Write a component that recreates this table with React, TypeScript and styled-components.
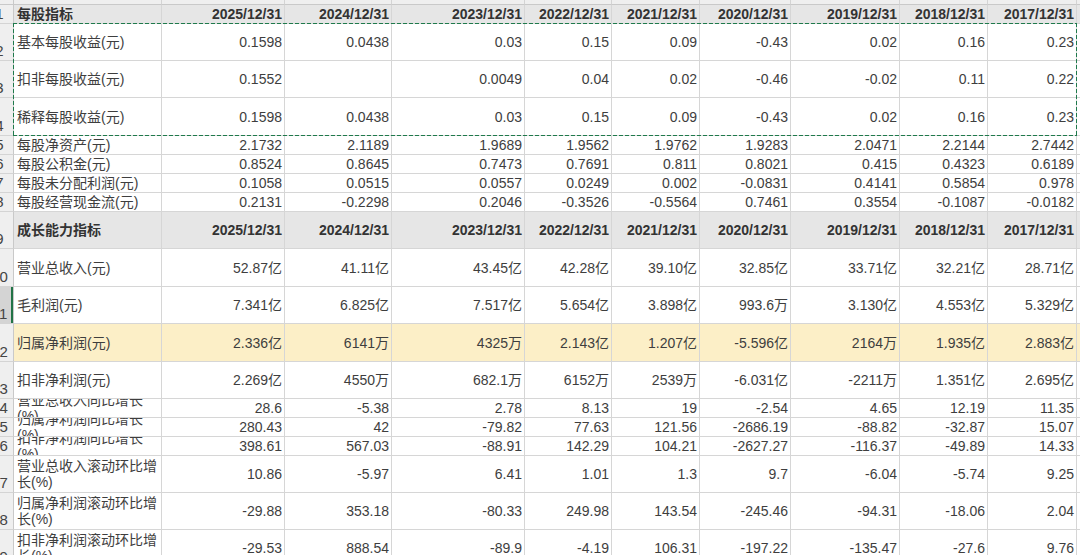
import React from "react";
import styled, { createGlobalStyle, css } from "styled-components";

const GlobalStyle = createGlobalStyle`
  html, body {
    margin: 0;
    padding: 0;
    background: #ffffff;
    overflow: hidden;
  }
  body {
    font-family: "Liberation Sans", "Noto Sans CJK SC", sans-serif;
  }
`;

const COLS = ["A", "B", "C", "D", "E", "F", "G", "H", "I", "J", "K"];
const COL_WIDTHS = [28, 148, 123, 107, 133, 87, 88, 91, 109, 88, 89, 80];
const ROW_HEIGHTS = [20, 19, 37, 37, 38, 19, 19, 19, 19, 37, 38, 37, 38, 37, 19, 19, 19, 37, 37, 37];
const MARQUEE = "#1f7a4c";

const YEARS = [
  "2025/12/31",
  "2024/12/31",
  "2023/12/31",
  "2022/12/31",
  "2021/12/31",
  "2020/12/31",
  "2019/12/31",
  "2018/12/31",
  "2017/12/31",
];

type SheetRow = {
  label: string;
  values: string[];
  kind?: "header" | "highlight";
};

const rows: SheetRow[] = [
  { label: "每股指标", values: YEARS, kind: "header" },
  { label: "基本每股收益(元)", values: ["0.1598", "0.0438", "0.03", "0.15", "0.09", "-0.43", "0.02", "0.16", "0.23"] },
  { label: "扣非每股收益(元)", values: ["0.1552", "", "0.0049", "0.04", "0.02", "-0.46", "-0.02", "0.11", "0.22"] },
  { label: "稀释每股收益(元)", values: ["0.1598", "0.0438", "0.03", "0.15", "0.09", "-0.43", "0.02", "0.16", "0.23"] },
  { label: "每股净资产(元)", values: ["2.1732", "2.1189", "1.9689", "1.9562", "1.9762", "1.9283", "2.0471", "2.2144", "2.7442"] },
  { label: "每股公积金(元)", values: ["0.8524", "0.8645", "0.7473", "0.7691", "0.811", "0.8021", "0.415", "0.4323", "0.6189"] },
  { label: "每股未分配利润(元)", values: ["0.1058", "0.0515", "0.0557", "0.0249", "0.002", "-0.0831", "0.4141", "0.5854", "0.978"] },
  { label: "每股经营现金流(元)", values: ["0.2131", "-0.2298", "0.2046", "-0.3526", "-0.5564", "0.7461", "0.3554", "-0.1087", "-0.0182"] },
  { label: "成长能力指标", values: YEARS, kind: "header" },
  { label: "营业总收入(元)", values: ["52.87亿", "41.11亿", "43.45亿", "42.28亿", "39.10亿", "32.85亿", "33.71亿", "32.21亿", "28.71亿"] },
  { label: "毛利润(元)", values: ["7.341亿", "6.825亿", "7.517亿", "5.654亿", "3.898亿", "993.6万", "3.130亿", "4.553亿", "5.329亿"] },
  { label: "归属净利润(元)", values: ["2.336亿", "6141万", "4325万", "2.143亿", "1.207亿", "-5.596亿", "2164万", "1.935亿", "2.883亿"], kind: "highlight" },
  { label: "扣非净利润(元)", values: ["2.269亿", "4550万", "682.1万", "6152万", "2539万", "-6.031亿", "-2211万", "1.351亿", "2.695亿"] },
  { label: "营业总收入同比增长(%)", values: ["28.6", "-5.38", "2.78", "8.13", "19", "-2.54", "4.65", "12.19", "11.35"] },
  { label: "归属净利润同比增长(%)", values: ["280.43", "42", "-79.82", "77.63", "121.56", "-2686.19", "-88.82", "-32.87", "15.07"] },
  { label: "扣非净利润同比增长(%)", values: ["398.61", "567.03", "-88.91", "142.29", "104.21", "-2627.27", "-116.37", "-49.89", "14.33"] },
  { label: "营业总收入滚动环比增长(%)", values: ["10.86", "-5.97", "6.41", "1.01", "1.3", "9.7", "-6.04", "-5.74", "9.25"] },
  { label: "归属净利润滚动环比增长(%)", values: ["-29.88", "353.18", "-80.33", "249.98", "143.54", "-245.46", "-94.31", "-18.06", "2.04"] },
  { label: "扣非净利润滚动环比增长(%)", values: ["-29.53", "888.54", "-89.9", "-4.19", "106.31", "-197.22", "-135.47", "-27.6", "9.76"] },
];

const gridTemplate = css`
  display: grid;
  grid-template-columns: ${COL_WIDTHS.map((w) => `${w}px`).join(" ")};
  grid-template-rows: ${ROW_HEIGHTS.map((h) => `${h}px`).join(" ")};
`;

// sheet and selection overlay are stacked in the same grid area
const Viewport = styled.div`
  display: grid;
  margin: -15px 0 0 -14px;
  width: max-content;
`;

const Sheet = styled.div`
  ${gridTemplate};
  grid-area: 1 / 1;
  font-size: 14px;
  color: #3a3a3a;
`;

const Overlay = styled.div`
  ${gridTemplate};
  grid-area: 1 / 1;
  pointer-events: none;
  z-index: 2;
`;

const Corner = styled.div`
  box-sizing: border-box;
  background: #efefef;
  border-right: 1px solid #c9c9c9;
  border-bottom: 1px solid #c9c9c9;
`;

const ColHeader = styled.div`
  box-sizing: border-box;
  display: flex;
  align-items: flex-end;
  justify-content: center;
  background: #efefef;
  border-right: 1px solid #d4d4d4;
  border-bottom: 1px solid #c9c9c9;
  color: #555;
  line-height: 14px;
  padding-bottom: 2px;
  overflow: hidden;
`;

const RowNumber = styled.div<{ $active?: boolean }>`
  box-sizing: border-box;
  display: flex;
  align-items: flex-end;
  justify-content: center;
  padding-bottom: 1px;
  background: ${({ $active }) => ($active ? "#d4d4d4" : "#efefef")};
  border-right: 1px solid #c9c9c9;
  border-bottom: 1px solid #d4d4d4;
  color: #444;
  font-size: 15px;
  line-height: 16px;
  overflow: hidden;
  ${({ $active }) =>
    $active &&
    css`
      box-shadow: inset -2px 0 0 #217346;
    `}
`;

const Cell = styled.div<{ $kind?: "header" | "highlight"; $align: "left" | "right" }>`
  box-sizing: border-box;
  display: flex;
  align-items: center;
  justify-content: ${({ $align }) => ($align === "left" ? "flex-start" : "flex-end")};
  padding: 0 2px 0 3px;
  border-right: 1px solid #d6d6d6;
  border-bottom: 1px solid #d6d6d6;
  overflow: hidden;
  line-height: 16px;
  white-space: ${({ $align }) => ($align === "left" ? "normal" : "nowrap")};
  background: ${({ $kind }) =>
    $kind === "header" ? "#e6e6e6" : $kind === "highlight" ? "#fcefc7" : "#ffffff"};
  font-weight: ${({ $kind }) => ($kind === "header" ? 700 : 400)};
  color: ${({ $kind }) => ($kind === "header" ? "#333" : "#3e3e3e")};
`;

const Label = styled.span`
  display: block;
  width: 100%;
`;

const dashH = `repeating-linear-gradient(90deg, ${MARQUEE} 0 4px, transparent 4px 6px)`;
const dashV = `repeating-linear-gradient(180deg, ${MARQUEE} 0 4px, transparent 4px 6px)`;

const Marquee = styled.div`
  grid-row: 3 / 6;
  grid-column: 2 / 12;
  margin: -1px 0 0 -1px;
  background:
    ${dashH} top left / 100% 1px no-repeat,
    ${dashH} bottom left / 100% 1px no-repeat,
    ${dashV} top left / 1px 100% no-repeat,
    ${dashV} top right / 1px 100% no-repeat;
`;

export default function App() {
  return (
    <>
      <GlobalStyle />
      <Viewport>
        <Sheet>
          <Corner />
          {COLS.map((c) => (
            <ColHeader key={c}>{c}</ColHeader>
          ))}
          {rows.map((row, i) => (
            <React.Fragment key={row.label}>
              <RowNumber $active={i + 1 === 11}>{i + 1}</RowNumber>
              <Cell $kind={row.kind} $align="left">
                <Label>{row.label}</Label>
              </Cell>
              {row.values.map((v, j) => (
                <Cell key={j} $kind={row.kind} $align="right">
                  {v}
                </Cell>
              ))}
              <Cell $kind={row.kind} $align="right" />
            </React.Fragment>
          ))}
        </Sheet>
        <Overlay>
          <Marquee />
        </Overlay>
      </Viewport>
    </>
  );
}
